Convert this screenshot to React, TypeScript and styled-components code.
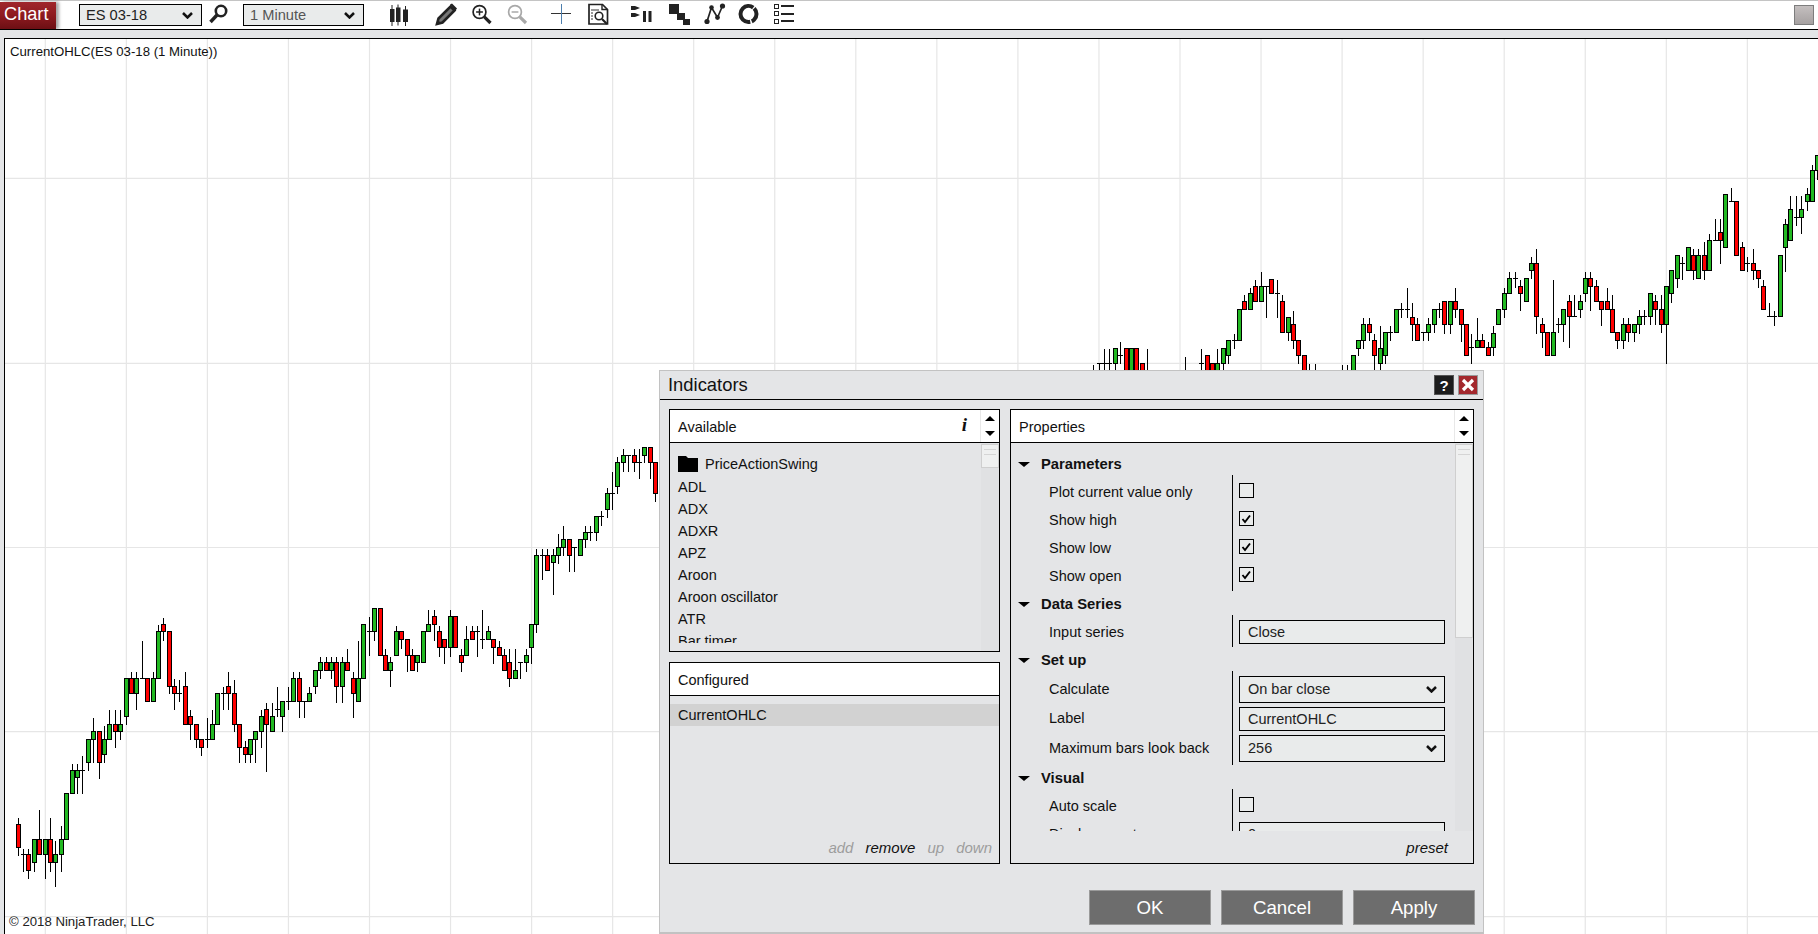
import React from "react";
import styled, { createGlobalStyle } from "styled-components";

const GlobalStyle = createGlobalStyle`
  html, body { margin: 0; padding: 0; height: 100%; overflow: hidden; background: #fff; }
  body { font-family: "Liberation Sans", Arial, sans-serif; color: #111; }
  #root { height: 100%; }
`;

/* ---------- candle data: read as [x, kind, top, bottom, high, low] in crop coordinates ---------- */
type C = [number, "G" | "R" | "D" | "W", number, number, number?, number?];
type Seg = { x0: number; y0: number; items: C[] };

const segments: Seg[] = [
  { x0: 0, y0: 600, items: [
    [55,"R",673,742,652,765],[70,"D",763,763,745,812],[85,"R",763,811,745,833],[103,"G",718,787,718,812],[118,"R",718,763,628,763],
    [136,"G",718,763,718,833],[151,"R",718,787,652,812],[166,"G",763,787,720,857],[184,"G",718,763,676,812],[199,"G",580,718],
    [217,"G",511,580,490,580],[232,"G",511,532,490,580],[247,"D",511,511,465,580],[265,"G",418,487,418,511],[280,"G",394,418,352,487],
    [298,"R",394,487,394,533],[313,"G",418,463,375,487],[328,"G",373,418,328,418],[346,"R",373,394,328,442],[361,"G",373,394,328,418],
    [379,"G",235,349,235,373],[394,"R",235,280,213,280],[409,"G",235,280,213,326],[427,"D",235,235,120,235],[442,"R",235,304],
    [460,"G",235,304,213,304],[475,"G",94,235,73,235],[490,"R",73,94,52,120],[508,"R",94,257,94,280],[523,"R",257,280,235,326],
    [538,"D",280,280,237,304],[556,"R",257,373,213,373],[571,"R",349,373,328,418],[589,"R",373,418,373,442],[604,"R",418,442,418,465],
    [622,"D",418,418,352,442],[637,"G",373,418,328,418],[652,"G",280,373],[670,"D",280,280,257,326],[685,"R",257,280,213,326],
    [703,"R",280,373,237,394],[718,"R",373,442,373,487],[736,"R",442,463,420,487],[751,"G",418,463,418,487],[766,"G",394,418,394,487],
    [784,"G",349,394,326,442],[799,"R",326,373,307,512],[817,"G",349,394,305,394],[832,"D",326,326,258,349],[847,"G",304,349,304,394],
    [865,"D",304,304,258,326],[880,"G",235,304,213,304],[898,"R",235,304,213,350],[913,"D",304,304,304,350],[928,"G",280,304,258,304],
    [946,"G",211,257,211,280],[961,"G",187,211,167,235],[979,"R",187,211,167,211],
  ]},
  { x0: 330, y0: 430, items: [
    [3,"G",697,720,678,745],[19,"R",697,767,678,815],[37,"G",697,767,678,815],[52,"R",697,720,655,720],[70,"R",745,790,724,860],
    [85,"G",745,814,630,814],[100,"G",583,745],[118,"D",604,604,558,676],[133,"G",535,604,535,630],[151,"R",535,676],
    [166,"R",676,720,655,720],[181,"G",697,720,678,767],[199,"G",604,676,586,676],[214,"R",604,628,604,655],[232,"R",628,676,628,722],
    [247,"R",676,720,655,720],[262,"G",676,697,676,722],[280,"G",604,697],[295,"G",583,604,537,604],[313,"R",559,583,537,630],
    [328,"R",604,652,586,678],[343,"R",628,652,628,698],[361,"G",559,652,537,678],[376,"R",559,652],[394,"R",676,697,655,722],
    [409,"G",628,676,586,676],[427,"R",604,628,586,628],[442,"D",604,604,586,678],[457,"D",628,628,537,654],[475,"G",604,628,586,628],
    [490,"R",628,652,628,698],[508,"R",652,676,630,676],[523,"R",676,721,655,721],[538,"R",697,745,655,768],[556,"G",721,745,655,745],
    [571,"D",697,697,697,745],[589,"G",676,697,655,722],[604,"G",583,652,583,698],[619,"G",376,583,355,605],[637,"D",376,376,355,446],
    [652,"R",376,421,355,421],[670,"G",376,397,355,491],[685,"G",352,376,310,398],[700,"G",328,352,286,376],[718,"R",328,376,328,422],
    [733,"D",352,352,352,422],[751,"G",328,376],[766,"G",307,328,286,352],[781,"D",307,307,286,330],[799,"G",259,307,259,330],
    [814,"D",259,259,240,284],[832,"G",190,238,170,260],[847,"D",190,190,124,238],[862,"G",97,169,78,190],[880,"G",76,97,55,122],
    [895,"D",76,76,76,122],[913,"R",76,97,55,122],[928,"D",97,97,55,145],[943,"G",52,76,52,97],[961,"R",52,97,52,145],[976,"R",97,190,97,214],
  ]},
  { x0: 1080, y0: 240, items: [
    [40,"W",372,400],[58,"D",370,370,370,400],[73,"D",370,370,323,400],[88,"D",370,370,323,400],[106,"G",323,370,323,400],
    [121,"D",346,346,304,370],[139,"R",323,400],[154,"G",323,400],[169,"R",323,400],[187,"R",370,400],[202,"W",323,400],
    [316,"W",349,400],[364,"D",370,370,325,400],[382,"R",346,400],[397,"R",370,400],[412,"G",370,400,323,400],[430,"G",323,370,323,400],
    [445,"G",301,346,301,370],[463,"D",301,301,280,323],[478,"G",208,301],[493,"R",184,208,163,208],[511,"G",160,208,140,208],
    [526,"R",139,184,117,184],[544,"G",139,184,93,184],[559,"D",139,139,139,230],[574,"R",116,160],[592,"D",160,160,117,230],
    [607,"R",184,277,163,277],[625,"G",230,277,230,301],[640,"R",253,301,210,325],[655,"R",301,346,301,370],[673,"R",346,400],
    [688,"W",370,400],[706,"W",370,400],[787,"W",372,400],[802,"W",372,400],[820,"G",346,400],[835,"G",301,323,301,346],
    [850,"G",253,301,232,323],[868,"R",253,277,232,301],[883,"R",301,346,280,400],[901,"G",323,370,255,400],[916,"G",277,346,277,370],
    [931,"D",277,277,255,301],[949,"G",208,277],[964,"D",208,208,186,230],[982,"D",208,208,141,230],[997,"R",230,253,186,300],
    [1012,"R",253,301,232,301],[1030,"D",277,277,277,301],[1045,"G",253,277,232,301],[1063,"G",208,253,208,277],[1078,"D",208,208,186,230],
  ]},
  { x0: 1440, y0: 140, items: [
    [13,"R",484,553,484,578],[31,"G",484,553,484,578],[46,"R",484,508,441,530],[64,"R",508,553,508,602],[79,"R",553,646],
    [94,"D",622,622,578,670],[112,"G",601,622,532,622],[127,"R",601,622,578,622],[145,"R",622,646,602,646],[160,"G",578,622,555,646],
    [175,"G",508,553],[193,"G",460,508,441,530],[208,"G",415,460,393,460],[226,"D",415,415,393,441],[241,"R",439,460,418,509],
    [259,"G",415,484],[274,"G",370,391,349,415],[289,"R",370,529,324,578],[307,"R",553,577,532,622],[322,"R",577,646],
    [340,"G",577,646,418,646],[355,"D",553,553,532,577],[370,"G",508,553,508,602],[388,"R",484,529,462,622],[403,"D",529,529,462,529],
    [421,"G",484,508,462,530],[436,"G",415,460,393,484],[451,"R",415,439,393,509],[469,"R",439,484,418,484],[484,"R",484,508,484,555],
    [502,"R",484,508,441,508],[517,"R",508,577,462,577],[532,"R",577,601,577,623],[550,"G",553,601,532,623],[565,"R",553,577,532,602],
    [583,"G",553,577,553,602],[598,"G",529,553,508,578],[613,"D",529,529,508,553],[631,"G",460,529,460,553],[646,"R",484,508,462,553],
    [664,"R",508,553,462,577],[679,"G",439,553,439,670],[694,"G",391,460,391,485],[712,"G",346,415,346,441],[727,"D",370,370,348,417],
    [745,"G",322,391],[760,"R",346,391,324,417],[775,"G",346,415,324,415],[793,"R",346,391,303,417],[808,"G",301,391,280,391],
    [826,"D",301,301,235,301],[841,"R",277,301,235,370],[856,"G",163,322],[874,"D",184,184,141,184],[889,"R",184,346],
    [907,"R",322,391,303,391],[922,"D",370,370,348,393],[940,"R",370,391,324,417],[955,"R",391,415,391,441],[970,"R",439,508,418,508],
    [988,"D",529,529,487,529],[1003,"D",529,529,510,555],[1021,"G",346,529],[1036,"G",253,322,234,393],[1051,"G",208,301,166,301],
    [1069,"D",232,232,166,255],[1084,"G",208,232,166,278],[1102,"G",163,184,140,210],[1117,"G",91,184,72,184],[1132,"G",46,91,46,116],
  ]},
];

const gridXs = Array.from({ length: 23 }, (_, i) => 45.3 + i * 81.05);
const gridYs = [178.3, 363.3, 547.5, 731.7, 916.7];

const PriceChart: React.FC = () => (
  <ChartSvg viewBox="5 39 1813 895" preserveAspectRatio="none">
    {gridXs.map((x) => <GridLine key={x} x1={x} x2={x} y1={39} y2={934} />)}
    {gridYs.map((y) => <GridLine key={y} x1={5} x2={1818} y1={y} y2={y} />)}
    <g shapeRendering="crispEdges">
      {segments.flatMap((s, si) =>
        s.items.map(([zx, kind, zt, zb, zh, zl], i) => {
          const x = Math.round(s.x0 + zx / 3) + 0.5;
          const p = (v: number) => Math.round(s.y0 + v / 3) + 0.5;
          const top = p(zt), bot = p(zb), hi = p(zh ?? zt), lo = p(zl ?? zb);
          return (
            <g key={`${si}-${i}`}>
              {hi !== lo && <line x1={x} x2={x} y1={hi} y2={lo} stroke="#000" />}
              {kind === "D" && <line x1={x - 2.5} x2={x + 2.5} y1={top} y2={top} stroke="#000" />}
              {(kind === "G" || kind === "R") && (
                <rect x={x - 2} y={top} width={4} height={bot - top} fill={kind === "G" ? "#22b922" : "#ff0000"} stroke="#000" />
              )}
            </g>
          );
        })
      )}
    </g>
  </ChartSvg>
);

/* ---------- page ---------- */
const Page = styled.div`
  display: flex;
  flex-direction: column;
  height: 934px;
  width: 1818px;
  overflow: hidden;
`;
const TopBar = styled.header`
  flex: 0 0 30px;
  box-sizing: border-box;
  display: flex;
  align-items: flex-start;
  border-top: 1px solid #c4c4c4;
  border-bottom: 1px solid #000;
  background: #fff;
`;
const ChartTab = styled.div`
  width: 56px;
  height: 27px;
  margin-top: 1px;
  line-height: 25px;
  padding-left: 4px;
  box-sizing: border-box;
  color: #fff;
  font-size: 18.2px;
  background: linear-gradient(180deg, #a0272c 0%, #8d1a1f 50%, #6d0f14 100%);
  box-shadow: 3px 0 3px rgba(0, 0, 0, 0.35);
`;
const SelectBox = styled.div<{ $w: number; $ml: number; $muted?: boolean }>`
  width: ${(p) => p.$w}px;
  margin-left: ${(p) => p.$ml}px;
  margin-top: 3px;
  height: 22px;
  box-sizing: border-box;
  border: 1px solid #000;
  background: #e9ebeb;
  display: flex;
  align-items: center;
  justify-content: space-between;
  padding: 0 8px 0 6px;
  font-size: 14.67px;
  color: ${(p) => (p.$muted ? "#555" : "#222")};
`;
const ToolIcon = styled.svg<{ $ml: number; $w: number }>`
  display: block;
  flex: none;
  width: ${(p) => p.$w}px;
  height: 28px;
  margin-left: ${(p) => p.$ml}px;
`;
const WindowButton = styled.div`
  margin-left: auto;
  margin-right: 4px;
  margin-top: 4px;
  width: 20px;
  height: 20px;
  box-sizing: border-box;
  border: 1px solid #7d7d7d;
  background: linear-gradient(180deg, #c4bfbf, #a6a1a1);
`;
const GrayStrip = styled.div`
  flex: 0 0 8px;
  background: #e4e5e7;
`;
const ChartRow = styled.div`
  flex: 1;
  display: flex;
  background: #e4e5e7;
  min-height: 0;
`;
const ChartArea = styled.main`
  flex: 1;
  position: relative;
  margin-left: 4px;
  border-left: 1px solid #000;
  border-top: 1px solid #000;
  background: #fff;
  min-width: 0;
`;
const ChartSvg = styled.svg`
  display: block;
  width: 100%;
  height: 100%;
`;
const GridLine = styled.line`
  stroke: #e6e6e6;
  stroke-width: 1.2;
`;
const ChartTitle = styled.div`
  position: absolute;
  left: 5px;
  top: 5px;
  font-size: 13.2px;
  line-height: 16px;
  color: #111;
`;
const Copyright = styled.div`
  position: absolute;
  left: 4px;
  bottom: 4px;
  font-size: 13.2px;
  line-height: 16px;
  color: #222;
`;

/* ---------- dialog ---------- */
const Dialog = styled.section`
  position: absolute;
  left: 654px;
  top: 331px;
  width: 825px;
  height: 564px;
  box-sizing: border-box;
  background: #e4e5e7;
  border: 1px solid #c2c2c2;
  border-bottom-width: 2px;
  display: flex;
  flex-direction: column;
`;
const DialogTitleBar = styled.div`
  flex: 0 0 28px;
  display: flex;
  align-items: center;
  padding: 0 5px 0 8px;
  border-bottom: 1px solid #000;
  font-size: 18.4px;
  color: #111;
  gap: 4px;
`;
const DialogTitle = styled.h2`
  flex: 1;
  margin: 0;
  font: inherit;
`;
const HeadButton = styled.div<{ $red?: boolean }>`
  width: 20px;
  height: 20px;
  box-sizing: border-box;
  border: 1px solid ${(p) => (p.$red ? "#9a9a9a" : "#555")};
  background: ${(p) => (p.$red ? "#a3282d" : "#1c1c1c")};
  color: #fff;
  display: flex;
  align-items: center;
  justify-content: center;
  font-size: 15px;
  font-weight: 700;
`;
const DialogBody = styled.div`
  display: flex;
  gap: 10px;
  padding: 9px 0 0 9px;
`;
const LeftColumn = styled.div`
  display: flex;
  flex-direction: column;
  gap: 10px;
  width: 331px;
`;
const Panel = styled.div<{ $h: number; $w?: number }>`
  height: ${(p) => p.$h}px;
  width: ${(p) => (p.$w ? `${p.$w}px` : "auto")};
  box-sizing: border-box;
  border: 1px solid #000;
  display: flex;
  flex-direction: column;
`;
const PanelHeader = styled.div`
  flex: 0 0 32px;
  display: flex;
  align-items: center;
  background: #fff;
  border-bottom: 1px solid #000;
  font-size: 14.5px;
  padding-left: 8px;
`;
const PanelLabel = styled.span`
  flex: 1;
  padding-top: 1px;
`;
const InfoMark = styled.span`
  font: italic 700 19px "Liberation Serif", serif;
  margin-right: 13px;
  margin-top: -3px;
`;
const ArrowColumn = styled.div`
  width: 18px;
  align-self: stretch;
  border-left: 1px solid #e8e8e8;
  display: flex;
  flex-direction: column;
  align-items: center;
  justify-content: center;
  gap: 10px;
`;
const Triangle = styled.i<{ $up?: boolean; $size?: number }>`
  display: block;
  width: 0;
  height: 0;
  border-left: ${(p) => p.$size ?? 5}px solid transparent;
  border-right: ${(p) => p.$size ?? 5}px solid transparent;
  ${(p) => (p.$up ? "border-bottom" : "border-top")}: ${(p) => (p.$size ? p.$size - 1 : 5)}px solid #000;
`;
const PanelBody = styled.div`
  flex: 1;
  display: flex;
  min-height: 0;
`;
const ListArea = styled.div`
  flex: 1;
  min-width: 0;
  height: 200px;
  overflow: hidden;
  padding: 10px 0 0 8px;
  box-sizing: border-box;
`;
const ListRow = styled.div<{ $gap?: number }>`
  height: 22px;
  line-height: 22px;
  font-size: 14.5px;
  white-space: nowrap;
  display: flex;
  align-items: center;
  gap: ${(p) => p.$gap ?? 0}px;
  margin-bottom: ${(p) => (p.$gap ? 1 : 0)}px;
`;
const FolderIcon = styled.svg`
  width: 20px;
  height: 16px;
  flex: none;
`;
const ScrollTrack = styled.div`
  width: 18px;
  flex: none;
  background: #e0e1e3;
  padding-top: 1px;
  box-sizing: border-box;
`;
const ScrollThumb = styled.div<{ $h: number }>`
  height: ${(p) => p.$h}px;
  box-sizing: border-box;
  border: 1px solid #cfcfcf;
  background: #eff0f0;
  padding: 4px 2px 0;
`;
const Grip = styled.div`
  height: 4px;
  border-top: 1px solid #d5d5d5;
  border-bottom: 1px solid #d5d5d5;
`;
const ConfiguredBody = styled.div`
  flex: 1;
  display: flex;
  flex-direction: column;
  padding-top: 8px;
`;
const SelectedRow = styled.div`
  height: 22px;
  line-height: 22px;
  padding-left: 8px;
  font-size: 14.5px;
  background: #d2d2d2;
`;
const ActionBar = styled.div`
  margin-top: auto;
  height: 32px;
  display: flex;
  justify-content: flex-end;
  align-items: center;
  gap: 12px;
  padding-right: 7px;
  font-size: 15px;
  font-style: italic;
`;
const ActionLink = styled.span<{ $on?: boolean }>`
  color: ${(p) => (p.$on ? "#111" : "#9d9d9d")};
`;
const PropsScroll = styled.div`
  flex: 1;
  min-width: 0;
  height: 388px;
  overflow: hidden;
  padding-top: 7px;
  box-sizing: border-box;
`;
const SectionRow = styled.div`
  height: 28px;
  display: flex;
  align-items: center;
  gap: 11px;
  padding-left: 7px;
  font-size: 14.8px;
  font-weight: 700;
`;
const GroupGrid = styled.div<{ $mb: number }>`
  display: flex;
  margin-bottom: ${(p) => p.$mb}px;
`;
const LabelColumn = styled.div`
  width: 221px;
  flex: none;
  padding-left: 38px;
  box-sizing: border-box;
`;
const ValueColumn = styled.div<{ $t: number; $b: number }>`
  flex: 1;
  border-left: 1px solid #000;
  padding-left: 6px;
  margin-top: -${(p) => p.$t}px;
  padding-top: ${(p) => p.$t}px;
  margin-bottom: -${(p) => p.$b}px;
  padding-bottom: ${(p) => p.$b}px;
`;
const LabelCell = styled.div<{ $h: number }>`
  height: ${(p) => p.$h}px;
  line-height: ${(p) => p.$h}px;
  font-size: 14.5px;
  white-space: nowrap;
`;
const ValueCell = styled.div<{ $h: number }>`
  height: ${(p) => p.$h}px;
  display: flex;
  align-items: center;
`;
const CheckBox = styled.div`
  width: 15px;
  height: 15px;
  margin-top: -3px;
  box-sizing: border-box;
  border: 1px solid #000;
  background: #e9ebeb;
  display: flex;
  align-items: center;
  justify-content: center;
`;
const TextBox = styled.div<{ $h: number }>`
  width: 206px;
  height: ${(p) => p.$h}px;
  box-sizing: border-box;
  border: 1px solid #000;
  background: #e9ebeb;
  padding: 0 7px 0 8px;
  display: flex;
  align-items: center;
  justify-content: space-between;
  font-size: 14.5px;
  color: #222;
`;
const PresetBar = styled.div`
  height: 32px;
  display: flex;
  justify-content: flex-end;
  align-items: center;
  padding-right: 25px;
  font-size: 15px;
  font-style: italic;
`;
const DialogFooter = styled.div`
  display: flex;
  justify-content: flex-end;
  gap: 10px;
  padding: 26px 8px 0 0;
`;
const DialogButton = styled.div`
  width: 122px;
  height: 35px;
  box-sizing: border-box;
  border: 1px solid #9a9a9a;
  background: #6d6d6d;
  color: #fff;
  font-size: 18.67px;
  padding-top: 1px;
  display: flex;
  align-items: center;
  justify-content: center;
`;

/* ---------- small drawings ---------- */
const Chevron: React.FC = () => (
  <svg width="11" height="7" viewBox="0 0 11 7">
    <path d="M1 1l4.500 4.500L10 1" fill="none" stroke="#111" strokeWidth="2.500" />
  </svg>
);
const Check: React.FC = () => (
  <svg width="11" height="10" viewBox="0 0 11 10">
    <path d="M1.500 5l2.500 3L9 1.500" fill="none" stroke="#000" strokeWidth="1.900" />
  </svg>
);
const Magnifier: React.FC<{ cx: number; cy: number; c: string; plus?: boolean; minus?: boolean }> = ({ cx, cy, c, plus, minus }) => (
  <g fill="none" stroke={c}>
    <circle cx={cx} cy={cy} r={6.4} strokeWidth="1.7" />
    <path d={`M${cx + 4.8} ${cy + 4.8}l6.2 6.2`} strokeWidth="3.2" />
    {(plus || minus) && <path d={`M${cx - 3.4} ${cy}h6.8`} strokeWidth="1.5" />}
    {plus && <path d={`M${cx} ${cy - 3.4}v6.8`} strokeWidth="1.5" />}
  </g>
);

const Toolbar: React.FC = () => (
  <TopBar>
    <ChartTab>Chart</ChartTab>
    <SelectBox $w={123} $ml={23}>ES 03-18<Chevron /></SelectBox>
    <ToolIcon $ml={5} $w={24} viewBox="0 0 24 28">
      <circle cx="14" cy="10" r="5.200" fill="none" stroke="#222" strokeWidth="2.600" />
      <path d="M10 14l-6.500 7" stroke="#222" strokeWidth="3.400" />
    </ToolIcon>
    <SelectBox $w={121} $ml={12} $muted>1 Minute<Chevron /></SelectBox>
    <ToolIcon $ml={24} $w={24} viewBox="0 0 24 28">
      <path d="M4 4v21M10 3.500v21M17.500 5v20" stroke="#222" strokeWidth="1" />
      <path d="M2 8h4.500v13H2zM8 6.500h4.500V21H8zM15 8.500h5V21h-5z" fill="#222" />
    </ToolIcon>
    <ToolIcon $ml={22} $w={24} viewBox="0 0 24 28">
      <path d="M4.500 17.500L16.500 5.500l4 4L8.500 21.500l-5.500 1.500z" fill="#777" stroke="#222" strokeWidth="2.600" />
      <path d="M16 3.500l2-1 5 5-1.500 2z" fill="#222" />
      <path d="M3 23.500l1-4.500 3.500 3.500z" fill="#222" />
    </ToolIcon>
    <ToolIcon $ml={13} $w={24} viewBox="0 0 24 28">
      <Magnifier cx={8.5} cy={11} c="#222" plus />
    </ToolIcon>
    <ToolIcon $ml={11} $w={24} viewBox="0 0 24 28">
      <Magnifier cx={9} cy={11} c="#a8a8a8" minus />
    </ToolIcon>
    <ToolIcon $ml={19} $w={24} viewBox="0 0 24 28" shapeRendering="crispEdges">
      <path d="M2 12.500h20" stroke="#333" />
      <path d="M12.500 3v20" stroke="#4d7fae" />
    </ToolIcon>
    <ToolIcon $ml={13} $w={24} viewBox="0 0 24 28">
      <path d="M3 3.500h13.500l5 5V23H3z" fill="#fff" stroke="#222" strokeWidth="1.700" />
      <path d="M16 3.500v5h5.500" fill="none" stroke="#222" strokeWidth="1.400" />
      <path d="M5 9h8M5 12h2M5 15h2M5 18h2" stroke="#333" />
      <circle cx="13" cy="15" r="3.800" fill="none" stroke="#222" strokeWidth="1.600" />
      <path d="M16 18l5 5" stroke="#222" strokeWidth="2.200" />
    </ToolIcon>
    <ToolIcon $ml={19} $w={24} viewBox="0 0 24 28">
      <path d="M2 5h4l5 2-5 2H2zM2 12h4l5 2-5 2H2z" fill="#222" />
      <path d="M14 10h3v11h-3zM19.500 10h3v11h-3z" fill="#222" />
    </ToolIcon>
    <ToolIcon $ml={14} $w={24} viewBox="0 0 24 28">
      <path d="M2 3h10v10H2zM10 12h8v7h-8zM16 18h7v6h-7z" fill="#222" />
    </ToolIcon>
    <ToolIcon $ml={11} $w={24} viewBox="0 0 24 28">
      <path d="M5 20.500L9.500 6.500l6 10L20.500 5" fill="none" stroke="#222" strokeWidth="1.700" />
      <circle cx="5" cy="20.500" r="2.600" fill="#222" /><circle cx="9.500" cy="6.500" r="2.300" fill="#222" />
      <circle cx="15.500" cy="16.500" r="2.400" fill="#222" /><circle cx="20.500" cy="5" r="2.600" fill="#222" />
    </ToolIcon>
    <ToolIcon $ml={10} $w={24} viewBox="0 0 24 28">
      <circle cx="12.500" cy="13" r="8" fill="none" stroke="#222" strokeWidth="4" strokeDasharray="15.400 1.600 31.700 1.600" transform="rotate(-45 12.500 13)" />
    </ToolIcon>
    <ToolIcon $ml={11} $w={24} viewBox="0 0 24 28" shapeRendering="crispEdges">
      <path d="M3.500 3.500h4v4h-4zM3.500 10.500h4v4h-4zM3.500 18.500h4v4h-4z" fill="#fff" stroke="#222" />
      <path d="M10 5h12.500M10 12.500h12.500M10 20h12.500" stroke="#222" strokeWidth="2" />
    </ToolIcon>
    <WindowButton />
  </TopBar>
);

const available = ["ADL", "ADX", "ADXR", "APZ", "Aroon", "Aroon oscillator", "ATR", "Bar timer"];

type Prop = { label: string; h: number; value: React.ReactNode };
const TB = (text: string, h = 24, select = false) => (
  <TextBox $h={h}>{text}{select && <Chevron />}</TextBox>
);
const groups: { title: string; t: number; b: number; mb: number; rows: Prop[] }[] = [
  { title: "Parameters", t: 3, b: 1, mb: 0, rows: [
    { label: "Plot current value only", h: 28, value: <CheckBox /> },
    { label: "Show high", h: 28, value: <CheckBox><Check /></CheckBox> },
    { label: "Show low", h: 28, value: <CheckBox><Check /></CheckBox> },
    { label: "Show open", h: 28, value: <CheckBox><Check /></CheckBox> },
  ]},
  { title: "Data Series", t: 3, b: 1, mb: 0, rows: [{ label: "Input series", h: 28, value: TB("Close") }] },
  { title: "Set up", t: 3, b: 2, mb: 1, rows: [
    { label: "Calculate", h: 30, value: TB("On bar close", 27, true) },
    { label: "Label", h: 29, value: TB("CurrentOHLC") },
    { label: "Maximum bars look back", h: 30, value: TB("256", 27, true) },
  ]},
  { title: "Visual", t: 3, b: 0, mb: 0, rows: [
    { label: "Auto scale", h: 28, value: <CheckBox /> },
    { label: "Displacement", h: 28, value: TB("0") },
  ]},
];

const IndicatorsDialog: React.FC = () => (
  <Dialog>
    <DialogTitleBar>
      <DialogTitle>Indicators</DialogTitle>
      <HeadButton>?</HeadButton>
      <HeadButton $red>
        <svg width="14" height="14" viewBox="0 0 14 14"><path d="M2 2l10 10M12 2L2 12" stroke="#fff" strokeWidth="3.200" /></svg>
      </HeadButton>
    </DialogTitleBar>
    <DialogBody>
      <LeftColumn>
        <Panel $h={243}>
          <PanelHeader>
            <PanelLabel>Available</PanelLabel>
            <InfoMark>i</InfoMark>
            <ArrowColumn><Triangle $up /><Triangle /></ArrowColumn>
          </PanelHeader>
          <PanelBody>
            <ListArea>
              <ListRow $gap={7}>
                <FolderIcon viewBox="0 0 20 16"><path d="M0 0h8l2 2h10v14H0z" fill="#000" /></FolderIcon>
                PriceActionSwing
              </ListRow>
              {available.map((a) => <ListRow key={a}>{a}</ListRow>)}
            </ListArea>
            <ScrollTrack><ScrollThumb $h={24}><Grip /></ScrollThumb></ScrollTrack>
          </PanelBody>
        </Panel>
        <Panel $h={202}>
          <PanelHeader><PanelLabel>Configured</PanelLabel></PanelHeader>
          <ConfiguredBody>
            <SelectedRow>CurrentOHLC</SelectedRow>
            <ActionBar>
              <ActionLink>add</ActionLink>
              <ActionLink $on>remove</ActionLink>
              <ActionLink>up</ActionLink>
              <ActionLink>down</ActionLink>
            </ActionBar>
          </ConfiguredBody>
        </Panel>
      </LeftColumn>
      <Panel $h={455} $w={464}>
        <PanelHeader>
          <PanelLabel>Properties</PanelLabel>
          <ArrowColumn><Triangle $up /><Triangle /></ArrowColumn>
        </PanelHeader>
        <PanelBody>
          <PropsScroll>
            {groups.map((g) => (
              <React.Fragment key={g.title}>
                <SectionRow><Triangle $size={6} />{g.title}</SectionRow>
                <GroupGrid $mb={g.mb}>
                  <LabelColumn>
                    {g.rows.map((r) => <LabelCell key={r.label} $h={r.h}>{r.label}</LabelCell>)}
                  </LabelColumn>
                  <ValueColumn $t={g.t} $b={g.b}>
                    {g.rows.map((r) => <ValueCell key={r.label} $h={r.h}>{r.value}</ValueCell>)}
                  </ValueColumn>
                </GroupGrid>
              </React.Fragment>
            ))}
          </PropsScroll>
          <ScrollTrack><ScrollThumb $h={194}><Grip /></ScrollThumb></ScrollTrack>
        </PanelBody>
        <PresetBar>preset</PresetBar>
      </Panel>
    </DialogBody>
    <DialogFooter>
      <DialogButton>OK</DialogButton>
      <DialogButton>Cancel</DialogButton>
      <DialogButton>Apply</DialogButton>
    </DialogFooter>
  </Dialog>
);

export default function App() {
  return (
    <Page>
      <GlobalStyle />
      <Toolbar />
      <GrayStrip />
      <ChartRow>
        <ChartArea>
          <PriceChart />
          <ChartTitle>CurrentOHLC(ES 03-18 (1 Minute))</ChartTitle>
          <Copyright>© 2018 NinjaTrader, LLC</Copyright>
          <IndicatorsDialog />
        </ChartArea>
      </ChartRow>
    </Page>
  );
}
